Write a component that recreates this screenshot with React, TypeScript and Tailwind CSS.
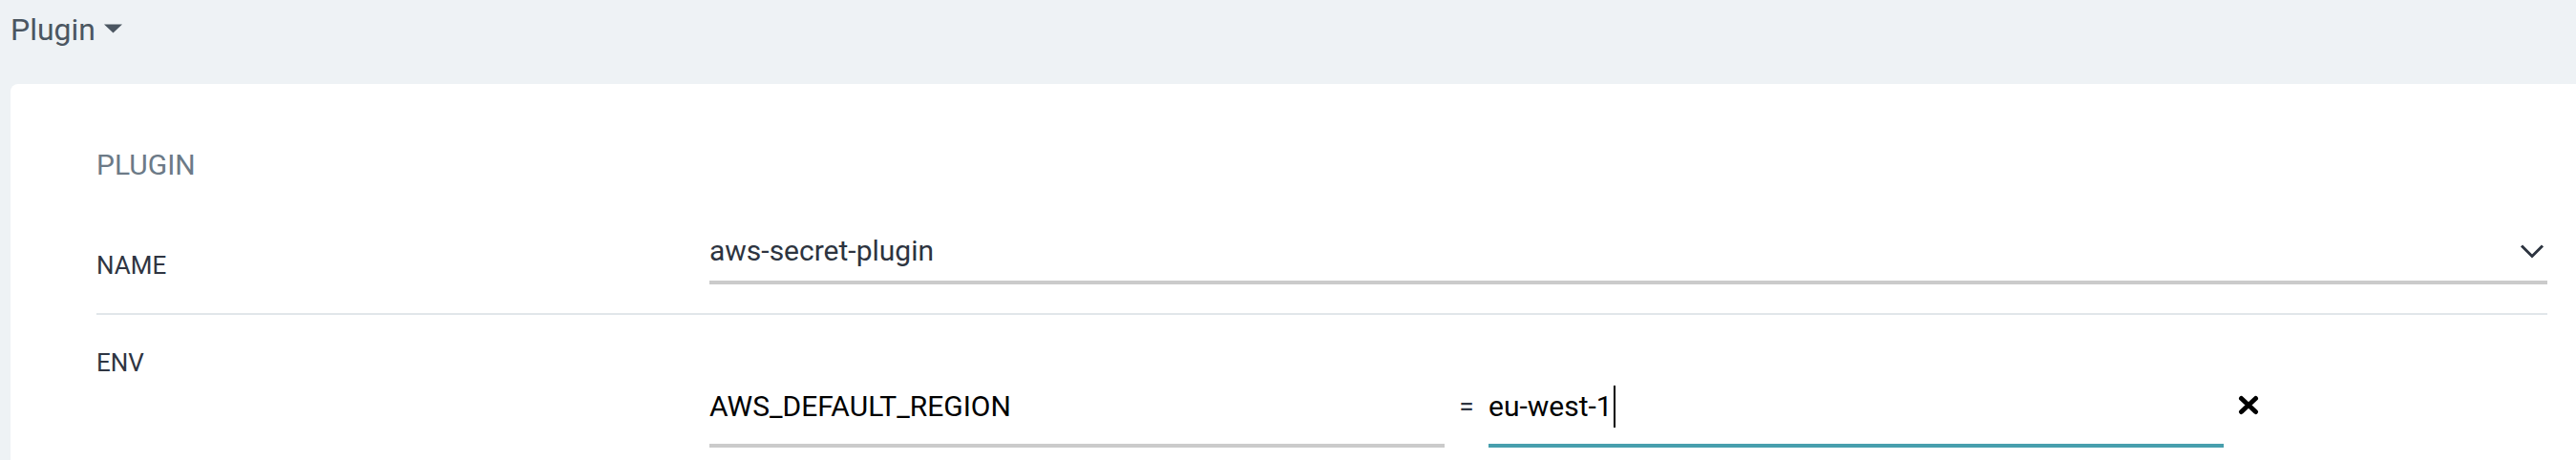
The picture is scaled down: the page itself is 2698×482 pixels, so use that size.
import React from 'react';

function CaretDown() {
    return (
        <svg width="19" height="10" viewBox="0 0 19 10" className="ml-[9px] mt-[10px]">
            <path d="M0 0.5h19L9.5 9.5z" fill="#4b5661" />
        </svg>
    );
}

function Chevron() {
    return (
        <svg width="26" height="16" viewBox="0 0 26 16">
            <path d="M2 2.5l11 11L24 2.5" fill="none" stroke="#2d3440" strokeWidth="3" />
        </svg>
    );
}

function CloseIcon() {
    return (
        <svg width="22" height="21" viewBox="0 0 22 21">
            <path
                d="M3.5 3.5l15 14M18.5 3.5l-15 14"
                stroke="#000"
                strokeWidth="5"
                strokeLinecap="round"
            />
        </svg>
    );
}

interface EnvVar {
    key: string;
    value: string;
}

const envVars: EnvVar[] = [{ key: 'AWS_DEFAULT_REGION', value: 'eu-west-1' }];

export default function App() {
    return (
        <div className="w-[2698px] h-[482px] overflow-hidden bg-[#eef2f5] font-['Roboto',sans-serif]">
            <div className="h-[88px] pl-[11px] pt-[15px] flex items-start">
                <span className="text-[32px] leading-none text-[#4b5661]">Plugin</span>
                <CaretDown />
            </div>
            <div className="ml-[11px] h-[394px] bg-white rounded-tl-[8px] pl-[90px] pr-[30px] pt-[70px]">
                <div className="text-[30px] leading-none text-[#6c7a87]">PLUGIN</div>

                <div className="flex pt-[60px] pb-[30px] border-b-2 border-[#e1e6ea]">
                    <div className="w-[642px] pt-[17px] text-[26px] leading-none text-[#2f3542]">
                        NAME
                    </div>
                    <div className="flex-1 flex items-center justify-between pb-[16px] pr-[3px] border-b-4 border-[#cbcbcb]">
                        <span className="text-[30px] leading-none text-[#2d3440]">
                            aws-secret-plugin
                        </span>
                        <Chevron />
                    </div>
                </div>

                <div className="flex">
                    <div className="w-[642px] pt-[37px] text-[26px] leading-none text-[#2f3542]">
                        ENV
                    </div>
                    <div className="flex-1 pt-[81px]">
                        {envVars.map((env) => (
                            <div key={env.key} className="flex items-start">
                                <div className="w-[770px] pb-[24px] border-b-4 border-[#cbcbcb] text-[30px] leading-none text-black">
                                    {env.key}
                                </div>
                                <div className="w-[46px] pt-[1px] text-center text-[28px] leading-none text-[#2d3440]">
                                    =
                                </div>
                                <div className="w-[770px] pb-[24px] border-b-4 border-[#479fad] text-[30px] leading-none text-black flex items-center">
                                    <span>{env.value}</span>
                                    <span className="ml-[1px] w-[2px] h-[44px] -my-[7px] bg-black" />
                                </div>
                                <button className="ml-[15px] mt-[3px]">
                                    <CloseIcon />
                                </button>
                            </div>
                        ))}
                    </div>
                </div>
            </div>
        </div>
    );
}
